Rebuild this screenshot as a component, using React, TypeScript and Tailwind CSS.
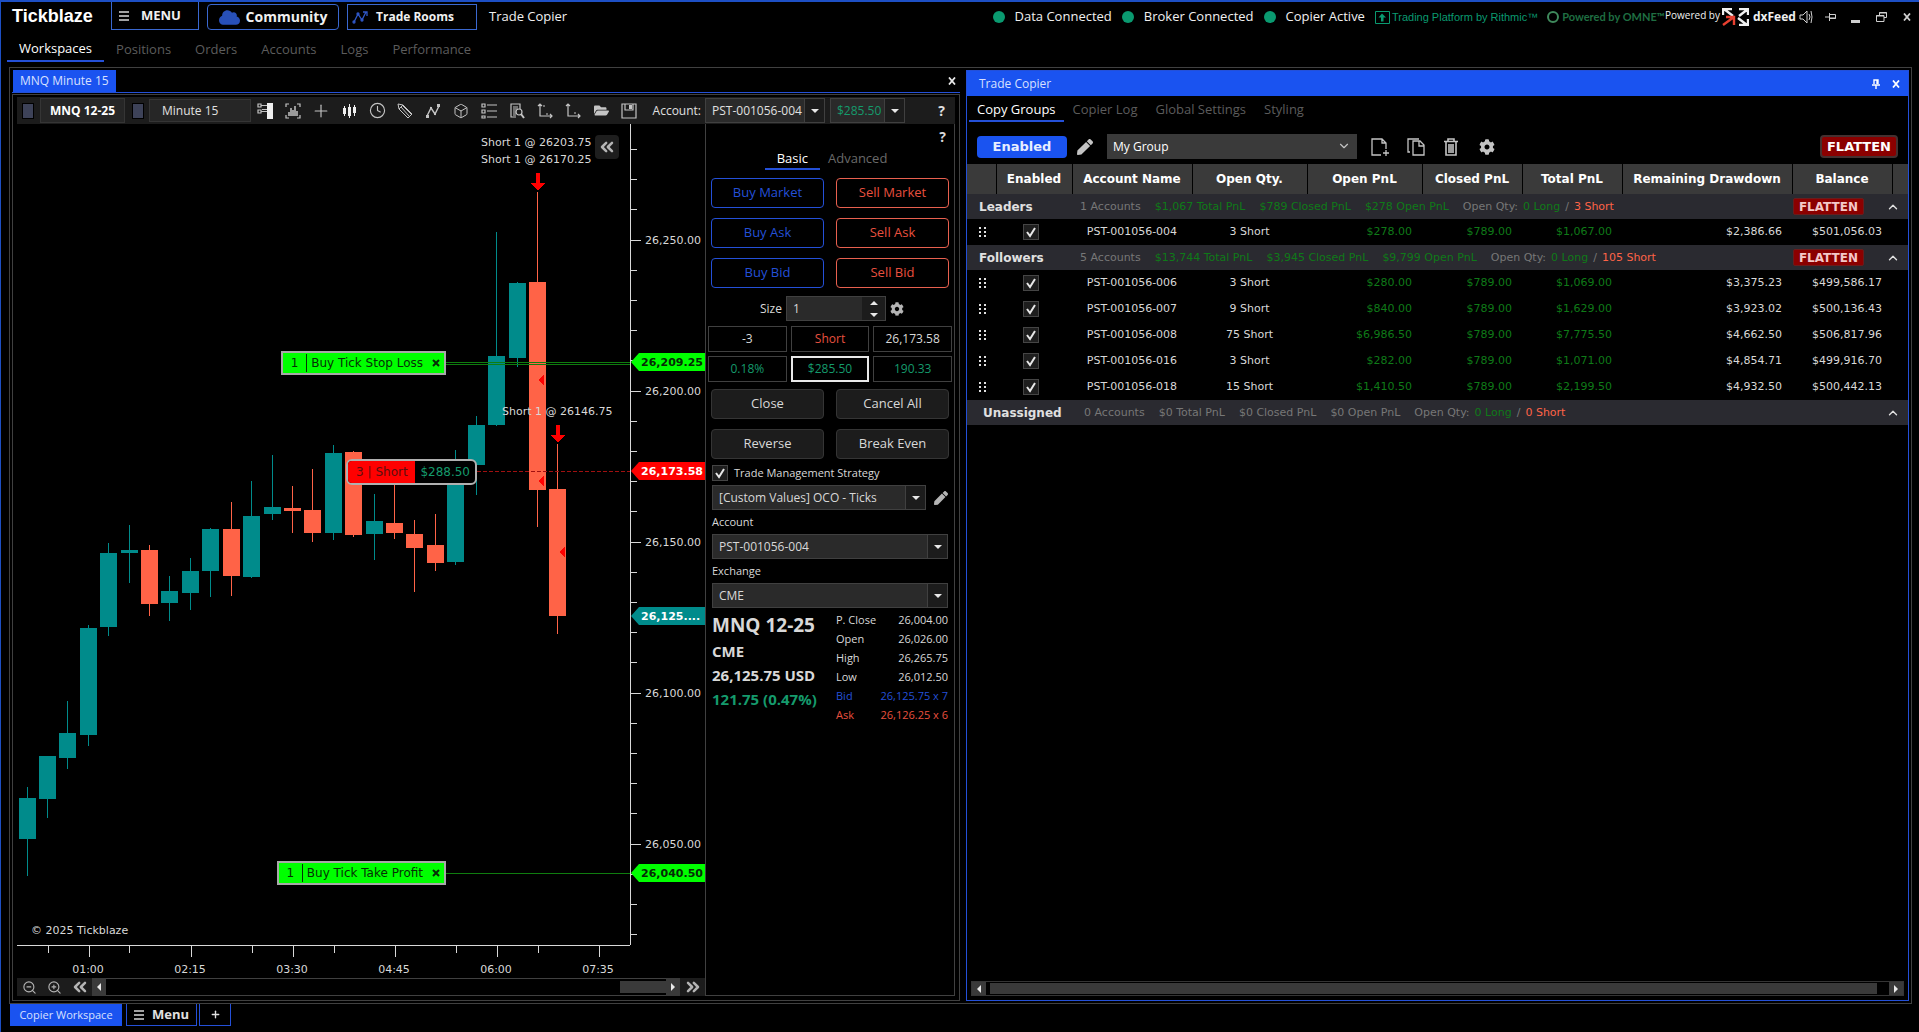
import type { ReactNode } from "react";
import clsx from "clsx";
import {
  Box,
  ChevronDown,
  ChevronUp,
  ChevronsLeft,
  ChevronsRight,
  Clock,
  Plus,
  ZoomIn,
  ZoomOut,
} from "lucide-react";
import { FaCloud, FaCog, FaFolderOpen, FaPen } from "react-icons/fa";

// [high, bodyTop, bodyBottom, low, rising]
type Candle = [number, number, number, number, boolean];

const candles: Candle[] = [
  [663, 674, 715, 752, true],
  [632, 632, 675, 694, true],
  [577, 609, 634, 645, true],
  [501, 504, 611, 622, true],
  [419, 429, 503, 512, true],
  [401, 426, 429, 459, true],
  [421, 426, 480, 492, false],
  [452, 467, 479, 497, true],
  [434, 447, 469, 486, true],
  [404, 405, 447, 473, true],
  [378, 405, 452, 472, false],
  [357, 392, 453, 454, true],
  [331, 383, 390, 396, true],
  [362, 384, 387, 409, false],
  [345, 386, 409, 418, false],
  [321, 329, 409, 416, true],
  [327, 328, 411, 413, false],
  [370, 397, 410, 436, true],
  [336, 399, 409, 415, false],
  [396, 410, 424, 468, false],
  [390, 421, 439, 447, false],
  [326, 346, 438, 441, true],
  [292, 301, 341, 371, true],
  [108, 232, 301, 302, true],
  [158, 159, 234, 243, true],
  [68, 158, 366, 403, false],
  [320, 365, 492, 510, false],
];

const priceTags = [
  { y: 238, label: "26,209.25", shape: "fill-[#00ff00]", text: "fill-[#062b06]" },
  { y: 347, label: "26,173.58", shape: "fill-[#ff0000]", text: "fill-white" },
  { y: 492, label: "26,125....", shape: "fill-[#008b8b]", text: "fill-white" },
  { y: 749, label: "26,040.50", shape: "fill-[#00ff00]", text: "fill-[#062b06]" },
];

const majorPrices = ["26,250.00", "26,200.00", "26,150.00", "26,100.00", "26,050.00"];
const times = ["01:00", "02:15", "03:30", "04:45", "06:00", "07:35"];
const minorTimes = [31, 112, 235, 317, 439, 521];

interface Account {
  name: string;
  qty: string;
  open: string;
  closed: string;
  total: string;
  drawdown: string;
  balance: string;
}

interface Group {
  name: string;
  count: number;
  total: string;
  closed: string;
  open: string;
  short: number;
  accounts: Account[];
}

const groups: Group[] = [
  {
    name: "Leaders",
    count: 1,
    total: "$1,067",
    closed: "$789",
    open: "$278",
    short: 3,
    accounts: [
      { name: "PST-001056-004", qty: "3 Short", open: "$278.00", closed: "$789.00", total: "$1,067.00", drawdown: "$2,386.66", balance: "$501,056.03" },
    ],
  },
  {
    name: "Followers",
    count: 5,
    total: "$13,744",
    closed: "$3,945",
    open: "$9,799",
    short: 105,
    accounts: [
      { name: "PST-001056-006", qty: "3 Short", open: "$280.00", closed: "$789.00", total: "$1,069.00", drawdown: "$3,375.23", balance: "$499,586.17" },
      { name: "PST-001056-007", qty: "9 Short", open: "$840.00", closed: "$789.00", total: "$1,629.00", drawdown: "$3,923.02", balance: "$500,136.43" },
      { name: "PST-001056-008", qty: "75 Short", open: "$6,986.50", closed: "$789.00", total: "$7,775.50", drawdown: "$4,662.50", balance: "$506,817.96" },
      { name: "PST-001056-016", qty: "3 Short", open: "$282.00", closed: "$789.00", total: "$1,071.00", drawdown: "$4,854.71", balance: "$499,916.70" },
      { name: "PST-001056-018", qty: "15 Short", open: "$1,410.50", closed: "$789.00", total: "$2,199.50", drawdown: "$4,932.50", balance: "$500,442.13" },
    ],
  },
  { name: "Unassigned", count: 0, total: "$0", closed: "$0", open: "$0", short: 0, accounts: [] },
];

function CheckBox({ label, children }: { label: string; children?: ReactNode }) {
  return (
    <label className="inline-flex items-center gap-1.5">
      <span className="relative block size-4">
        <input
          type="checkbox"
          defaultChecked
          aria-label={label}
          className="peer block size-4 appearance-none border border-[#454545] bg-[#1e1e1e]"
        />
        <svg viewBox="0 0 16 16" className="pointer-events-none absolute inset-0 hidden size-4 peer-checked:block">
          <path d="M4 8l3 4 5-8" fill="none" stroke="#e8e8e8" strokeWidth="2" />
        </svg>
      </span>
      {children}
    </label>
  );
}

function Combo({ label, value, className }: { label: string; value: string; className?: string }) {
  return (
    <div className={clsx("relative h-[25px] border border-[#404040] bg-[#2a2a2a]", className)}>
      <select aria-label={label} className="block h-full w-full appearance-none pr-5 pl-1.5 text-xs outline-none">
        <option>{value}</option>
      </select>
      <span className="pointer-events-none absolute inset-y-0 right-0 flex w-5 items-center justify-center border-l border-[#404040] bg-[#1c1c1c]">
        <svg width="8" height="4" viewBox="0 0 8 4">
          <path d="M0 0h8L4 4z" fill="#e8e8e8" />
        </svg>
      </span>
    </div>
  );
}

function ToolIcon({ label, children }: { label: string; children: ReactNode }) {
  return (
    <button aria-label={label} className="flex w-7 shrink-0 items-center justify-center text-[#c4c4c4]">
      {children}
    </button>
  );
}

function Glyph({ children, size = 16 }: { children: ReactNode; size?: number }) {
  return (
    <svg width={size} height={size} viewBox="0 0 16 16" fill="none" stroke="currentColor" strokeWidth="1.2">
      {children}
    </svg>
  );
}

function ChartTools() {
  return (
    <div className="flex h-full items-center">
      <ToolIcon label="Chart trader">
        <Glyph>
          <path d="M10 0h6v16h-6z" fill="#f0f0f0" stroke="none" />
          <path d="M1 1h3v3H1zM1 7h3v3H1zM4 2.500h6M4 8.500h6" />
          <path d="M5 6h5v1H5z" fill="currentColor" stroke="none" />
        </Glyph>
      </ToolIcon>
      <ToolIcon label="Fit bars">
        <Glyph>
          <path d="M1 4V1h3M12 1h3v3M1 12v3h3M12 15h3v-3" />
          <path d="M4 9v4M6 5v8M8 7v6M10 3v10M12 8v5" strokeWidth="1.5" />
        </Glyph>
      </ToolIcon>
      <ToolIcon label="Crosshair">
        <Plus size={20} strokeWidth={1.4} />
      </ToolIcon>
      <ToolIcon label="Chart style">
        <Glyph>
          <path d="M3.500 3v10M8.500 1v14M13.500 2v11" stroke="#f0f0f0" strokeWidth="1" />
          <path d="M2 5h3v6H2zM7 4h3v9H7zM12 4h3v6h-3z" fill="#f0f0f0" stroke="none" />
        </Glyph>
      </ToolIcon>
      <ToolIcon label="Interval">
        <Clock size={17} strokeWidth={1.6} />
      </ToolIcon>
      <ToolIcon label="Drawing tools">
        <Glyph>
          <path d="M1 1l1 5 9 9 4-4-9-9zM4 4l8 9M6 3l8 8M2 6l4-4" strokeWidth="1" />
        </Glyph>
      </ToolIcon>
      <ToolIcon label="Indicators">
        <Glyph>
          <path d="M2 13l4-8 4 6 4-8" strokeWidth="1.4" />
          <path d="M1 12h3v3H1zM5 4h2v2H5zM9 10h2v2H9zM12 1h3v3h-3z" fill="currentColor" stroke="none" />
        </Glyph>
      </ToolIcon>
      <ToolIcon label="Objects">
        <Box size={16} strokeWidth={1.5} />
      </ToolIcon>
      <ToolIcon label="Data list">
        <Glyph>
          <path d="M1 1h3v3H1zM1 7h3v3H1zM1 13h3v2H1zM6 2h10M6 8h10M6 14h10" />
        </Glyph>
      </ToolIcon>
      <ToolIcon label="Report">
        <Glyph>
          <path d="M7 14H2V1h9v5M4 4h5M4 6h5M4 8h3M4 10h3M4 12h3" />
          <circle cx="10" cy="9" r="3" />
          <path d="M12 11l3 4" strokeWidth="2" />
        </Glyph>
      </ToolIcon>
      <ToolIcon label="Scale in">
        <Glyph>
          <path d="M3 1v12h12M1 3l2-2 2 2M13 11l2 2-2 2M6 3h2M9 11h2" />
        </Glyph>
      </ToolIcon>
      <ToolIcon label="Scale out">
        <Glyph>
          <path d="M3 1v12h12M1 3l2-2 2 2M13 11l2 2-2 2M9 10h2" />
        </Glyph>
      </ToolIcon>
      <ToolIcon label="Open">
        <FaFolderOpen size={15} />
      </ToolIcon>
      <ToolIcon label="Save">
        <Glyph>
          <path d="M1 1h14v14H1zM4 1v6h8V1" />
          <path d="M8 2h3v4H8z" fill="currentColor" stroke="none" />
        </Glyph>
      </ToolIcon>
    </div>
  );
}

function OrderTag({ children, className }: { children: ReactNode; className: string }) {
  return (
    <div
      className={clsx(
        "absolute right-[184px] flex h-[24px] items-center border-2 border-[#a8a8a8] bg-[#00ff00] font-['DejaVu_Sans'] text-xs text-[#063006]",
        className,
      )}
    >
      <span className="flex h-[18px] w-6 items-center justify-center border-r border-[#063006]">1</span>
      <span className="pr-[5px] pl-1">{children}</span>
      <button aria-label="Cancel order" className="px-1">
        <svg width="8" height="8" viewBox="0 0 8 8">
          <path d="M1 1l6 6M7 1L1 7" stroke="#063006" strokeWidth="2" />
        </svg>
      </button>
    </div>
  );
}

function Plot() {
  return (
    <div className="relative min-w-0 flex-1 overflow-hidden">
      <svg className="absolute inset-0 h-full w-full font-['DejaVu_Sans'] text-[11px]" shapeRendering="crispEdges">
        {candles.map(([high, top, bottom, low, rising], i) => {
          const x = Math.floor(10.5 + i * 20.42 - 8.5);
          return (
            <g key={i} className={rising ? "fill-[#008b8b]" : "fill-[#ff6347]"}>
              <rect x={x + 8} y={high} width="1" height={low - high} />
              <rect x={x} y={top} width="17" height={bottom - top} />
            </g>
          );
        })}
        <g className="fill-[#ff0000]">
          <path d="M519 49h4v10h5l-7 8-7-8h5z" />
          <path d="M539 301h4v10h5l-7 8-7-8h5z" />
          <path d="M521 256l6-6v12zM521 357l6-6v12zM542 428l6-6v12z" />
        </g>
        <line x1="429" x2="100%" y1="238" y2="238" stroke="#0f7d0f" />
        <line x1="429" x2="100%" y1="240" y2="240" stroke="#0f7d0f" />
        <line x1="429" x2="100%" y1="749" y2="749" stroke="#0f7d0f" />
        <line x1="460" x2="100%" y1="347" y2="347" stroke="#a01010" strokeDasharray="4 2" />
        <g className="fill-[#d8d8d8]">
          <text x="464" y="22">Short 1 @ 26203.75</text>
          <text x="464" y="39">Short 1 @ 26170.25</text>
          <text x="485" y="291">Short 1 @ 26146.75</text>
          <text x="14" y="810">© 2025 Tickblaze</text>
        </g>
      </svg>

      <button aria-label="Collapse" className="absolute top-[11px] right-[11px] flex size-6 items-center justify-center rounded bg-[#1e1e1e] text-[#b4b4b4]">
        <ChevronsLeft size={20} strokeWidth={3} />
      </button>
      <OrderTag className="top-[227px]">Buy Tick Stop Loss</OrderTag>
      <OrderTag className="top-[737px]">Buy Tick Take Profit</OrderTag>
      <div className="absolute top-[335px] right-[153px] flex h-[26px] items-stretch overflow-hidden rounded-md border-2 border-[#b0b0b0] bg-black font-['DejaVu_Sans'] text-xs">
        <span className="flex w-[67px] items-center justify-center bg-[#ff0000] text-[#5a1010]">3 | Short</span>
        <span className="flex items-center px-[5px] text-[#159a6c]">$288.50</span>
      </div>
    </div>
  );
}

function PriceAxis() {
  return (
    <svg className="h-full w-[75px] shrink-0 font-['DejaVu_Sans'] text-[11px]">
      <line x1="0.5" x2="0.5" y1="0" y2="100%" stroke="#d8d8d8" />
      {Array.from({ length: 27 }, (_, k) => {
        const y = Math.round(25 + k * 30.2) + 0.5;
        return <line key={k} x1="0" x2={k % 5 === 3 ? 11 : 7} y1={y} y2={y} stroke="#d8d8d8" />;
      })}
      {majorPrices.map((price, i) => (
        <text key={price} x="15" y={120 + i * 151} className="fill-[#d8d8d8]">
          {price}
        </text>
      ))}
      {priceTags.map(({ y, label, shape, text }) => (
        <g key={label}>
          <path d={`M1 ${y}l8-9h66v18H9z`} className={shape} />
          <text x="11" y={y + 4} className={clsx("font-bold", text)}>
            {label}
          </text>
        </g>
      ))}
    </svg>
  );
}

function TimeAxis() {
  return (
    <div className="mr-[75px] h-[33px] border-t border-[#d8d8d8]">
      <svg className="h-full w-full font-['DejaVu_Sans'] text-[11px]" shapeRendering="crispEdges">
        {minorTimes.map((x) => (
          <rect key={x} x={x} y="0" width="1" height="7" className="fill-[#d8d8d8]" />
        ))}
        {times.map((time, i) => (
          <g key={time} className="fill-[#d8d8d8]">
            <rect x={72 + i * 102} y="0" width="1" height="11" />
            <text x={71 + i * 102} y="27" textAnchor="middle">
              {time}
            </text>
          </g>
        ))}
      </svg>
    </div>
  );
}

function ChartScroller() {
  return (
    <div className="flex h-[18px] shrink-0 items-stretch bg-[#1c1c1c] text-[#b4b4b4]">
      <button aria-label="Zoom out" className="flex w-[25px] items-center justify-center">
        <ZoomOut size={15} strokeWidth={1.8} />
      </button>
      <button aria-label="Zoom in" className="flex w-[25px] items-center justify-center">
        <ZoomIn size={15} strokeWidth={1.8} />
      </button>
      <button aria-label="First bar" className="flex w-[25px] items-center justify-center">
        <ChevronsLeft size={20} strokeWidth={3} />
      </button>
      <ScrollArrow dir="left" />
      <div className="flex flex-1 justify-end border-y border-[#404040] bg-black py-0.5">
        <div className="w-[46px] bg-[#3a3a3a]" />
      </div>
      <ScrollArrow dir="right" />
      <button aria-label="Last bar" className="flex w-[25px] items-center justify-center">
        <ChevronsRight size={20} strokeWidth={3} />
      </button>
    </div>
  );
}

function ScrollArrow({ dir }: { dir: "left" | "right" }) {
  return (
    <button aria-label={`Scroll ${dir}`} className="flex w-3.5 items-center justify-center bg-[#3a3a3a]">
      <svg width="4" height="8" viewBox="0 0 4 8">
        <path d={dir === "left" ? "M4 0v8L0 4z" : "M0 0v8l4-4z"} fill="#e8e8e8" />
      </svg>
    </button>
  );
}

const quotes = [
  ["P. Close", "26,004.00", "text-[#d8d8d8]"],
  ["Open", "26,026.00", "text-[#d8d8d8]"],
  ["High", "26,265.75", "text-[#d8d8d8]"],
  ["Low", "26,012.50", "text-[#d8d8d8]"],
  ["Bid", "26,125.75 x 7", "text-[#2450d8]"],
  ["Ask", "26,126.25 x 6", "text-[#e8503f]"],
];

const positionCells = [
  ["-3", "border-[#404040] text-[#d8d8d8]"],
  ["Short", "border-[#404040] text-[#e8503f]"],
  ["26,173.58", "border-[#404040] text-[#d8d8d8]"],
  ["0.18%", "border-[#404040] text-[#159a6c]"],
  ["$285.50", "border-2 border-[#e8e8e8] text-[#159a6c]"],
  ["190.33", "border-[#404040] text-[#159a6c]"],
];

function OrderPanel() {
  return (
    <aside className="w-[250px] shrink-0 border border-t-0 border-[#404040] text-xs text-[#d8d8d8]">
      <div className="flex h-[26px] items-center justify-end pr-2">
        <button className="text-sm font-bold">?</button>
      </div>
      <div className="flex h-5 justify-center gap-2 pr-2 text-[13px]">
        <button className="flex items-start border-b-2 border-[#2450d8] px-3 leading-4 text-white">Basic</button>
        <button className="flex items-start leading-4 text-[#6a6a6a]">Advanced</button>
      </div>

      <div className="mt-2 grid grid-cols-2 gap-x-3 gap-y-2.5 px-[5px] text-[13px]">
        {["Market", "Ask", "Bid"].map((kind) => (
          <div key={kind} className="contents">
            <button className="h-[30px] rounded border border-[#2450d8] text-[#2450d8]">Buy {kind}</button>
            <button className="h-[30px] rounded border border-[#e8604f] text-[#e8503f]">Sell {kind}</button>
          </div>
        ))}
      </div>

      <div className="mt-2 flex items-center pl-[54px]">
        <label htmlFor="size" className="w-[26px]">
          Size
        </label>
        <div className="flex h-[25px] w-[100px] border border-[#404040] bg-[#2a2a2a]">
          <input id="size" defaultValue="1" className="w-0 flex-1 px-1.5 outline-none" />
          <span className="flex w-[23px] flex-col items-center justify-center gap-2 bg-[#1c1c1c]">
            <svg width="8" height="16" viewBox="0 0 8 16" fill="#e8e8e8">
              <path d="M0 4h8L4 0zM0 12h8l-4 4z" />
            </svg>
          </span>
        </div>
        <button aria-label="Size settings" className="ml-1 text-[#b4b4b4]">
          <FaCog size={14} />
        </button>
      </div>

      <div className="mt-[5px] grid grid-cols-3 gap-1 px-0.5">
        {positionCells.map(([text, look]) => (
          <div key={text} className={clsx("flex h-[26px] items-center justify-center border", look)}>
            {text}
          </div>
        ))}
      </div>

      <div className="mt-[7px] grid grid-cols-2 gap-x-3 gap-y-2.5 px-[5px] text-[13px]">
        {["Close", "Cancel All", "Reverse", "Break Even"].map((action) => (
          <button key={action} className="h-[30px] rounded border border-[#353535] bg-[#1c1c1c]">
            {action}
          </button>
        ))}
      </div>

      <div className="flex flex-col px-1.5 pt-1.5">
        <CheckBox label="Trade Management Strategy">
          <span className="text-[11px]">Trade Management Strategy</span>
        </CheckBox>
        <div className="mt-1 flex items-center gap-2">
          <Combo label="Strategy" value="[Custom Values] OCO - Ticks" className="flex-1" />
          <button aria-label="Edit strategy" className="text-[#b4b4b4]">
            <FaPen size={14} />
          </button>
        </div>
        <span className="flex h-6 items-center text-[11px]">Account</span>
        <Combo label="Account" value="PST-001056-004" />
        <span className="flex h-6 items-center text-[11px]">Exchange</span>
        <Combo label="Exchange" value="CME" />
      </div>

      <div className="grid grid-cols-2 gap-x-3 px-1.5 pt-[3px]">
        <div className="font-bold whitespace-nowrap">
          <h2 className="text-[19px] leading-7">MNQ 12-25</h2>
          <p className="text-[15px] leading-6">CME</p>
          <p className="text-[15px] leading-6">26,125.75 USD</p>
          <p className="text-[15px] leading-6 text-[#159a6c]">121.75 (0.47%)</p>
        </div>
        <dl className="text-[11px] whitespace-nowrap">
          {quotes.map(([name, value, tone]) => (
            <div key={name} className={clsx("flex h-[19px] items-center justify-between", tone)}>
              <dt>{name}</dt>
              <dd>{value}</dd>
            </div>
          ))}
        </dl>
      </div>
    </aside>
  );
}

function ChartWindow() {
  return (
    <section className="flex min-w-0 flex-col">
      <div className="flex h-[23px] items-stretch justify-between border-b border-[#2450d8]">
        <button className="ml-px bg-[#1a53f0] px-[7px] text-xs text-[#d8e0ff]">MNQ Minute 15</button>
        <button aria-label="Close chart" className="px-1 text-[#e8e8e8]">
          <CloseX />
        </button>
      </div>
      <div className="mt-px flex min-h-0 flex-1 flex-col border border-[#404040] px-1 pt-0.5 pb-1">
        <div className="flex h-[27px] shrink-0 items-center bg-[#1c1c1c] text-xs text-[#e0e0e0]">
          <button aria-label="Link symbol" className="ml-[5px] h-4 w-3 shrink-0 border border-black bg-[#3d4258]" />
          <input
            aria-label="Symbol"
            defaultValue="MNQ 12-25"
            className="ml-1.5 h-[25px] w-[85px] border border-[#353535] bg-[#262626] text-center font-bold text-white outline-none"
          />
          <button aria-label="Link interval" className="ml-[7px] h-4 w-3 shrink-0 border border-black bg-[#3d4258]" />
          <input
            aria-label="Interval"
            defaultValue="Minute 15"
            className="ml-[5px] h-[23px] w-[102px] border border-[#353535] bg-[#262626] px-3 outline-none"
          />
          <ChartTools />
          <span className="flex-1 pr-1 text-right whitespace-nowrap">Account:</span>
          <div className="flex w-[250px] shrink-0 items-center">
            <Combo label="Chart account" value="PST-001056-004" className="w-[120px]" />
            <Combo label="Profit" value="$285.50" className="ml-[5px] w-[75px] text-[#159a6c]" />
            <button className="ml-auto pr-2.5 text-sm font-bold">?</button>
          </div>
        </div>
        <div className="flex min-h-0 flex-1">
          <div className="flex min-w-0 flex-1 flex-col">
            <div className="flex min-h-0 flex-1">
              <Plot />
              <PriceAxis />
            </div>
            <TimeAxis />
            <ChartScroller />
          </div>
          <OrderPanel />
        </div>
      </div>
    </section>
  );
}

function CloseX() {
  return (
    <svg width="8" height="8" viewBox="0 0 8 8">
      <path d="M1 0.5l6 7M7 0.5l-6 7" stroke="currentColor" strokeWidth="1.8" />
    </svg>
  );
}

function DragDots() {
  return (
    <svg width="8" height="12" viewBox="0 0 8 12" fill="#e0e0e0">
      <path d="M0 1h2v2H0zM5 1h2v2H5zM0 5h2v2H0zM5 5h2v2H5zM0 9h2v2H0zM5 9h2v2H5z" />
    </svg>
  );
}

function GroupRow({ group }: { group: Group }) {
  const empty = group.count === 0;
  const money = empty ? "text-[#777777]" : "text-[#0f7a18]";
  return (
    <tr className="h-[25px] bg-[#2a2a30]">
      <td colSpan={10} className="p-0">
        <div className={clsx("flex h-[25px] items-center whitespace-nowrap text-[#777777]", empty ? "pl-4" : "pl-3")}>
          <span className="w-[101px] text-xs font-bold text-[#e0e0e0]">{group.name}</span>
          <div className="flex gap-3.5 leading-4">
            <span>{group.count} Accounts</span>
            <span className={money}>{group.total} Total PnL</span>
            <span className={money}>{group.closed} Closed PnL</span>
            <span className={money}>{group.open} Open PnL</span>
            <span className="flex gap-[5px]">
              Open Qty: <span className="text-[#0f7a18]">0 Long</span> / <span className="text-[#ff6347]">{group.short} Short</span>
            </span>
          </div>
          <div className="ml-auto flex items-center">
            {!empty && (
              <button className="h-[17px] rounded-xs border border-[#6a1c1c] bg-[#8b0000] px-[5px] text-xs leading-[14px] font-bold text-[#f4c8c8]">
                FLATTEN
              </button>
            )}
            <button aria-label={`Collapse ${group.name}`} className="mr-2 ml-[22px] text-[#e0e0e0]">
              <ChevronUp size={14} strokeWidth={2.4} />
            </button>
          </div>
        </div>
      </td>
    </tr>
  );
}

function AccountRow({ account }: { account: Account }) {
  return (
    <tr className="h-[26px]">
      <td className="py-0 pl-3">
        <DragDots />
      </td>
      <td className="p-0 pr-1.5">
        <div className="flex justify-center">
          <CheckBox label={`Enable ${account.name}`} />
        </div>
      </td>
      <td className="p-0 text-center">{account.name}</td>
      <td className="p-0 text-center">{account.qty}</td>
      <td className="py-0 pr-2.5 text-right text-[#0f7a18]">{account.open}</td>
      <td className="py-0 pr-2.5 text-right text-[#0f7a18]">{account.closed}</td>
      <td className="py-0 pr-2.5 text-right text-[#0f7a18]">{account.total}</td>
      <td className="py-0 pr-2.5 text-right">{account.drawdown}</td>
      <td className="py-0 pr-2.5 text-right">{account.balance}</td>
      <td className="p-0" />
    </tr>
  );
}

const headings = ["", "Enabled", "Account Name", "Open Qty.", "Open PnL", "Closed PnL", "Total PnL", "Remaining Drawdown", "Balance", ""];

function AccountsTable() {
  return (
    <table className="mt-[5px] w-full table-fixed border-collapse font-['DejaVu_Sans'] text-[11px] text-[#d8d8d8]">
      <colgroup>
        <col className="w-[29px]" />
        <col className="w-[76px]" />
        <col className="w-[120px]" />
        <col className="w-[115px]" />
        <col className="w-[115px]" />
        <col className="w-[100px]" />
        <col className="w-[100px]" />
        <col className="w-[170px]" />
        <col className="w-[100px]" />
        <col />
      </colgroup>
      <thead>
        <tr className="h-[30px] bg-[#3a3a3a] text-xs text-white">
          {headings.map((heading, i) => (
            <th key={i} className="border-r border-black p-0 font-bold whitespace-nowrap last:border-r-0">
              {heading}
            </th>
          ))}
        </tr>
      </thead>
      {groups.map((group) => (
        <tbody key={group.name}>
          <GroupRow group={group} />
          {group.accounts.map((account) => (
            <AccountRow key={account.name} account={account} />
          ))}
        </tbody>
      ))}
    </table>
  );
}

function TradeCopier() {
  return (
    <section className="flex min-w-0 flex-col border border-[#2450d8]">
      <header className="flex h-[25px] shrink-0 items-center bg-[#1a53f0] pr-2 pl-3 text-xs text-[#d8e0ff]">
        <h2 className="pt-px">Trade Copier</h2>
        <div className="ml-auto flex items-center gap-3 text-white">
          <button aria-label="Pin panel">
            <svg width="8" height="10" viewBox="0 0 8 10" fill="none" stroke="currentColor" strokeWidth="1.4">
              <path d="M2 5V1h4v4M5 1v4M0 6h8M4 6v4" />
            </svg>
          </button>
          <button aria-label="Close panel">
            <CloseX />
          </button>
        </div>
      </header>
      <nav className="mt-0.5 flex h-6 items-stretch px-0.5 text-[13px] text-[#5c5c5c]">
        <button className="mr-px border-b-2 border-[#2450d8] px-2 pt-0.5 text-white">Copy Groups</button>
        <button className="px-2 pb-px">Copier Log</button>
        <button className="px-2.5 pb-px">Global Settings</button>
        <button className="px-2 pb-px">Styling</button>
      </nav>
      <div className="mt-3 flex h-[25px] shrink-0 items-center pr-2.5 pl-2.5 text-[#c4c4c4]">
        <button className="h-[22px] w-[90px] rounded-sm bg-[#1a53f0] font-['DejaVu_Sans'] text-[13px] font-bold text-[#e8eeff]">
          Enabled
        </button>
        <button aria-label="Rename group" className="ml-2.5">
          <FaPen size={16} />
        </button>
        <div className="relative ml-3.5 h-[25px] w-[250px]">
          <select aria-label="Copy group" className="block h-full w-full appearance-none bg-[#3a3a3a] px-1.5 text-xs text-white outline-none">
            <option>My Group</option>
          </select>
          <ChevronDown size={14} strokeWidth={2} className="pointer-events-none absolute top-[5px] right-1.5" />
        </div>
        <div className="ml-3.5 flex items-center gap-[18px]">
          <button aria-label="New group">
            <svg width="18" height="18" viewBox="0 0 18 18" fill="none" stroke="currentColor" strokeWidth="1.3">
              <path d="M10 17H1V1h10l4 4v6M11 1v4h4M15 12v6M12 15h6" />
            </svg>
          </button>
          <button aria-label="Duplicate group">
            <svg width="18" height="18" viewBox="0 0 18 18" fill="none" stroke="currentColor" strokeWidth="1.3">
              <path d="M3 14H1V1h11M6 3h7l4 4v10H6zM12 3v5h5" />
            </svg>
          </button>
          <button aria-label="Delete group">
            <svg width="16" height="18" viewBox="0 0 16 18" fill="none" stroke="currentColor" strokeWidth="1.6">
              <path d="M1 3.500h14M5 3V1h6v2M3 4v13h10V4M6 6v9M8 6v9M10 6v9" />
            </svg>
          </button>
          <button aria-label="Group settings" className="ml-0.5">
            <FaCog size={16} />
          </button>
        </div>
        <button className="ml-auto h-[23px] w-[78px] rounded-sm border-2 border-[#453030] bg-[#8b0000] font-['DejaVu_Sans'] text-[13px] leading-none font-bold text-white">
          FLATTEN
        </button>
      </div>
      <AccountsTable />
      <div className="mx-1 mt-auto mb-1 flex h-[15px] border border-[#353535]">
        <ScrollArrow dir="left" />
        <div className="flex-1 py-px pr-3 pl-1">
          <div className="h-full bg-[#3a3a3a]" />
        </div>
        <ScrollArrow dir="right" />
      </div>
    </section>
  );
}

function Status({ children }: { children: ReactNode }) {
  return (
    <span className="flex items-center gap-2.5">
      <span className="size-3 rounded-full bg-[#0a9a70]" />
      {children}
    </span>
  );
}

function MenuBars() {
  return (
    <svg width="10" height="10" viewBox="0 0 10 10" stroke="#d8d8d8" strokeWidth="1.4">
      <path d="M0 1h10M0 5h10M0 9h10" />
    </svg>
  );
}

function TitleBar() {
  return (
    <header className="flex h-7 items-stretch text-[13px] text-[#f0f0f0]">
      <h1 className="w-[110px] pl-[11px] font-['Liberation_Sans'] text-lg leading-[28px] font-bold text-white">Tickblaze</h1>
      <button className="flex w-[88px] items-center gap-3 border border-t-0 border-[#3a68d0] pl-[7px] font-bold">
        <MenuBars />
        MENU
      </button>
      <a
        href="#community"
        className="mt-0.5 ml-2 flex w-[132px] items-center justify-center gap-1.5 rounded border border-[#3a68d0] text-sm font-bold"
      >
        <FaCloud size={21} className="text-[#2850b8]" />
        Community
      </a>
      <a
        href="#rooms"
        className="mt-0.5 ml-2 flex w-[130px] items-center gap-2 border border-[#3a68d0] pl-1 text-xs font-bold"
      >
        <svg width="16" height="14" viewBox="0 0 16 14" fill="none" stroke="#3058c8" strokeWidth="1.3">
          <path d="M2 12l4-8 4 6 4-8M11 2h4v4" />
          <circle cx="2" cy="12" r="1" />
          <circle cx="6" cy="4" r="1" />
          <circle cx="10" cy="10" r="1" />
        </svg>
        Trade Rooms
      </a>
      <span className="ml-3 flex items-center pt-0.5">Trade Copier</span>

      <div className="ml-auto flex items-center pt-0.5 pr-2 whitespace-nowrap">
        <div className="flex items-center gap-2.5">
          <Status>Data Connected</Status>
          <Status>Broker Connected</Status>
          <Status>Copier Active</Status>
        </div>
        <span className="ml-2.5 flex items-center gap-0.5 font-['Liberation_Sans'] text-[11px] text-[#0a9a70]">
          <svg width="15" height="13" viewBox="0 0 15 13" fill="none" stroke="#0a9a70">
            <path d="M0.5 0.5h14v12H0.5z" />
            <path d="M7 2.5l4 4H8.500v4H6v-4H3.500z" fill="#0a9a70" stroke="none" />
          </svg>
          Trading Platform by Rithmic™
        </span>
        <span className="ml-2 flex items-center gap-0.5 font-['Lato'] text-[11px] font-bold text-[#1f6e42]">
          <svg width="14" height="12" viewBox="0 0 14 12" fill="none" stroke="#3f8a5c" strokeWidth="2">
            <ellipse cx="7" cy="6" rx="5" ry="5" />
          </svg>
          Powered by OMNE™
        </span>
        <span className="flex items-center pb-1 text-[10px]">Powered by</span>
        <svg width="27" height="18" viewBox="0 0 27 18" fill="none" className="ml-0.5">
          <path d="M1 7V1h9M2 1l9 7M17 1h9v6M26 1l-9 7M26 11v6h-9M25 17l-9-7" stroke="#f0f0f0" strokeWidth="2.4" />
          <path d="M1 17L12 9M4 9h8v8" stroke="#e84030" strokeWidth="2.4" />
        </svg>
        <span className="ml-1 w-[42px] text-xs font-bold">dxFeed</span>
        <div className="ml-1 flex items-center text-[#d0d0d0]">
          <button aria-label="Sound">
            <svg width="14" height="14" viewBox="0 0 14 14" fill="none" stroke="currentColor">
              <path d="M1 5v4h3l4 4V1L4 5zM10 4q2 3 0 6M12 1q2 6 0 12" />
            </svg>
          </button>
          <button aria-label="Pin" className="ml-3">
            <svg width="12" height="8" viewBox="0 0 12 8" fill="none" stroke="currentColor">
              <path d="M0 4h4M4.500 0v8M4.500 1.500h6v4h-6M4 5h7" />
            </svg>
          </button>
          <button aria-label="Minimize" className="ml-3.5 pt-2">
            <span className="block h-[3px] w-[9px] bg-current" />
          </button>
          <button aria-label="Restore" className="ml-4">
            <svg width="11" height="10" viewBox="0 0 11 10" fill="none" stroke="currentColor">
              <path d="M3.500 3V0.500h7v5H8M0.500 3.500H8v6H0.500zM0 4h8M3 1h8" />
            </svg>
          </button>
          <button aria-label="Close" className="ml-4">
            <CloseX />
          </button>
        </div>
      </div>
    </header>
  );
}

export default function App() {
  return (
    <div className="flex h-screen flex-col overflow-hidden border-t-2 border-l border-[#1d4fc4] bg-black font-['Open_Sans',sans-serif] text-[#e0e0e0]">
      <TitleBar />
      <nav className="flex h-8 shrink-0 pl-1.5 text-[13px] text-[#5c5c5c]">
        <a href="#workspaces" className="flex items-center border-b-2 border-[#2450d8] px-3 pt-2 text-white">
          Workspaces
        </a>
        {["Positions", "Orders", "Accounts", "Logs", "Performance"].map((tab) => (
          <a key={tab} href={`#${tab.toLowerCase()}`} className="flex items-center px-3 pt-2">
            {tab}
          </a>
        ))}
      </nav>

      <main className="mt-[5px] mr-[7px] ml-2 grid min-h-0 flex-1 grid-cols-[948fr_943fr] grid-rows-[minmax(0,1fr)] gap-1.5 border border-[#404040] p-0.5">
        <ChartWindow />
        <TradeCopier />
      </main>

      <footer className="flex h-[28px] shrink-0 items-start gap-1 pl-[9px]">
        <button className="h-[22px] w-[112px] bg-[#1a53f0] text-[11px] text-[#d8e0ff]">Copier Workspace</button>
        <button className="flex h-[22px] w-[71px] items-center justify-center gap-2 border border-t-0 border-[#2450d8] text-[13px] font-bold">
          <MenuBars />
          Menu
        </button>
        <button aria-label="Add workspace" className="-ml-0.5 flex h-[22px] w-8 items-center justify-center border border-t-0 border-[#2450d8]">
          <Plus size={11} strokeWidth={3} />
        </button>
      </footer>
    </div>
  );
}
